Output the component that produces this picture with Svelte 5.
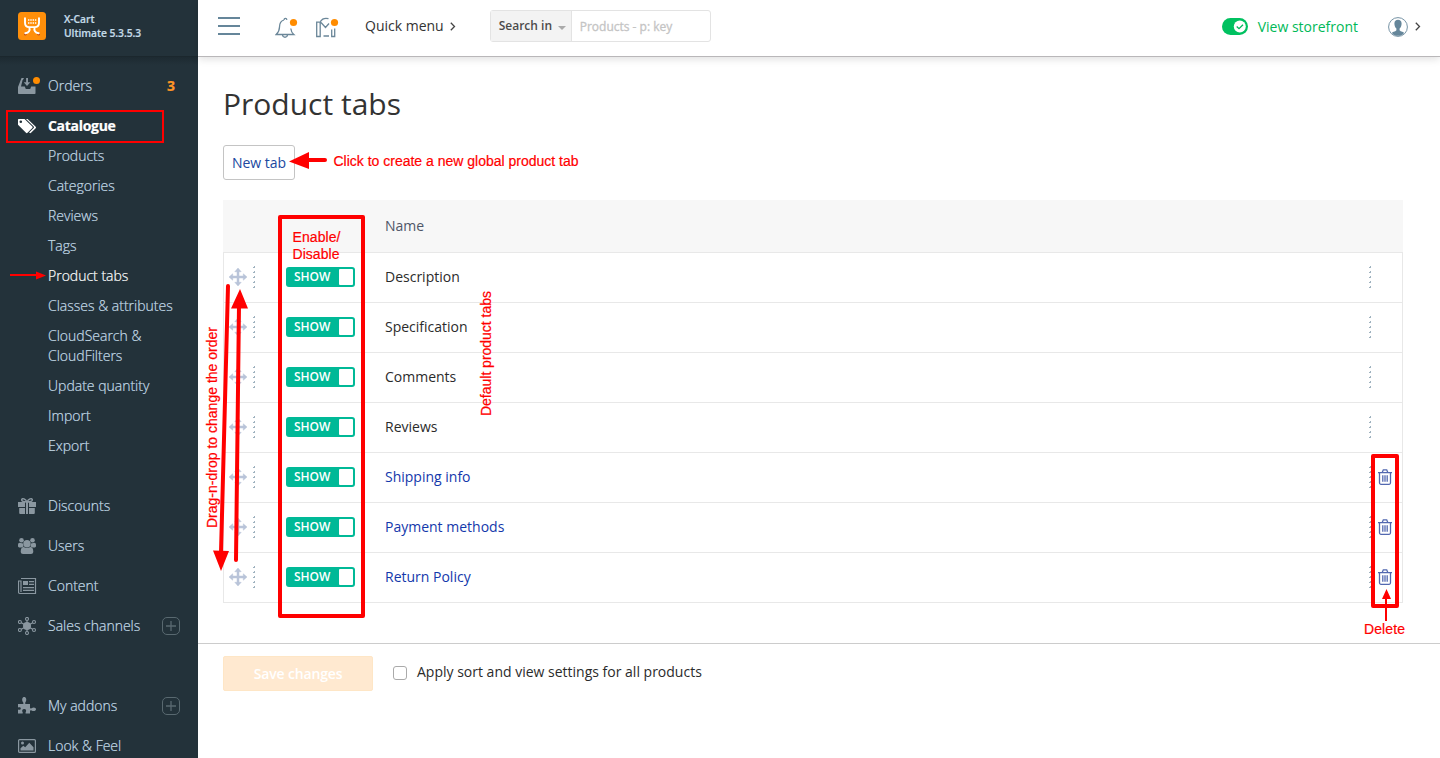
<script>
  const sub = ['Products', 'Categories', 'Reviews', 'Tags', 'Product tabs', 'Classes & attributes', 'CloudSearch & CloudFilters', 'Update quantity', 'Import', 'Export'];
  const rows = [
    { name: 'Description' },
    { name: 'Specification' },
    { name: 'Comments' },
    { name: 'Reviews' },
    { name: 'Shipping info', custom: true },
    { name: 'Payment methods', custom: true },
    { name: 'Return Policy', custom: true }
  ];
  const lower = [
    { name: 'Discounts', icon: 'gift' },
    { name: 'Users', icon: 'users' },
    { name: 'Content', icon: 'news' },
    { name: 'Sales channels', icon: 'hub', add: true },
    { name: 'My addons', icon: 'puzzle', add: true, gap: true },
    { name: 'Look & Feel', icon: 'image' }
  ];
</script>

{#snippet dots()}
  <svg class="dots" width="2" height="22" viewBox="0 0 2 22">
    {#each [0, 5, 10, 15, 20] as y}
      <path d="M1 {y}h1v2h-2v-1h1z" fill="#9fb2bf" />
    {/each}
  </svg>
{/snippet}

{#snippet icon(name)}
  <svg class="icon" width="20" height="18" viewBox="0 0 20 18">
    {#if name === 'orders'}
      <path d="M3.5 1H6L4.9 3H4.6L3 9.5h3.8l1 2.5h4.4l1-2.500H17.5V16.2a.8.8 0 0 1-.8.8H.8a.8.8 0 0 1-.8-.8V10z" />
      <path d="M8.1 1h1.9v4.3h2.3L9 9 5.8 5.3h2.3z" />
    {:else if name === 'tags'}
      <path fill-rule="evenodd" d="M0 2.6V7.8L8 15.7a1 1 0 0 0 1.5 0L14.300 11a1 1 0 0 0 0-1.5L6.500 2H.7a.7.7 0 0 0-.7.6zM2.800 3.500a1.300 1.300 0 1 1 0 2.600a1.300 1.300 0 0 1 0-2.600z" />
      <path d="M8 2h1.600l8.100 7.800a1 1 0 0 1 0 1.400L13 15.800a1 1 0 0 1-1.500 0l-.4-.4 4.600-4.500a1 1 0 0 0 0-1.400z" />
    {:else if name === 'gift'}
      <path d="M0 5h7v5H0zM11 5h7v5h-7zM1.200 11H7v6H2.200a1 1 0 0 1-1-1zM11 11h5.800v5a1 1 0 0 1-1 1H11zM8 5h2v12H8z" />
      <path d="M9 5C7.500 2 4.300.6 3.700 2.500 3.200 4.500 6 4.800 9 5c3 0 5.700-.5 5.300-2.500C13.700.6 10.500 2 9 5z" fill="none" stroke="#8a97a0" stroke-width="1.500" />
    {:else if name === 'users'}
      <circle cx="3.500" cy="3.300" r="2.300" /><circle cx="14.500" cy="3.300" r="2.300" />
      <path d="M0 9.500V8c0-1.500.7-2.300 1.700-2.300L5 6.500 5.500 9.500 3.500 10.500H1zM18 9.500V8c0-1.500-.7-2.300-1.700-2.300L13 6.500l-.5 3 2 1H17z" />
      <circle cx="9" cy="6.700" r="3.700" />
      <path d="M2.700 14.500c0-3.300 1.300-4.600 3-4.600 2 1.500 4.600 1.500 6.600 0 1.700 0 3 1.300 3 4.600 0 1.700-1 2.500-2.300 2.500H5c-1.300 0-2.300-.8-2.300-2.500z" />
    {:else if name === 'news'}
      <path d="M3 1.500h14.500v15H2a1.500 1.500 0 0 1-1.500-1.500V4H3v11" fill="none" stroke="#8a97a0" stroke-width="1.200" />
      <path d="M5 4h5v4H5zM11 4h5v1.200h-5zM11 6.800h5V8h-5zM5 10h11v1.200H5zM5 12.700h11v1.200H5z" />
    {:else if name === 'hub'}
      <path d="M9 1v16M2 5l14 8M16 5L2 13" stroke="#8a97a0" stroke-width="1.200" />
      <circle cx="9" cy="9" r="4" />
      {#each [[9, 1.9], [9, 16], [1.900, 5], [16, 5], [1.900, 13], [16, 13]] as [x, y]}
        <circle cx={x} cy={y} r="1.500" fill="#23323a" stroke="#8a97a0" stroke-width="1.100" />
      {/each}
    {:else if name === 'puzzle'}
      <path d="M0 7h4.300c1.300 0 1.400-.7.900-1.500C3.300 2.500 4.300 0 6.200 0s3 2.500 1.100 5.500C6.800 6.300 7.200 7 8.300 7H12v3.500c0 1 .7 1.300 1.500.8 2-1.500 4.500-.7 4.500 1s-2.500 2.500-4.500 1.100c-.8-.5-1.500-.2-1.500.8V16.500H8.300c-.8 0-1-.6-.6-1.300.9-1.500.4-3.200-1.500-3.200s-2.500 1.700-1.600 3.200c.5.8.2 1.300-.8 1.300H0v-4c1.500.8 2.800.2 2.800-1s-1.300-1.600-2.800-.9z" />
    {:else}
      <rect x=".6" y="2.600" width="16.800" height="12.800" rx="1" fill="none" stroke="#8a97a0" stroke-width="1.200" />
      <circle cx="4.500" cy="6" r="1.500" />
      <path d="M2.500 13.500V11.300L5.300 8.800 7.200 10.300 11.300 5.800 15.500 10.200v3.300z" />
    {/if}
  </svg>
{/snippet}

<div class="app">
  <aside>
    <div class="brand">
      <svg width="28" height="28" viewBox="0 0 28 28">
        <rect width="28" height="28" rx="3.500" fill="#ff8f0a" />
        <g fill="#c94f10"><circle cx="7.300" cy="22.300" r="1.300" /><circle cx="20.700" cy="22.300" r="1.300" /></g>
        <path d="M7 6.300v4.500c0 2.700 1.700 4.300 4.300 4.300h5.400c2.600 0 4.300-1.600 4.300-4.300V6.300M11.300 15.200c1 3-.3 5.600-4 6M16.700 15.200c-1 3 .3 5.600 4 6" fill="none" stroke="#fff" stroke-width="1.900" stroke-linecap="round" />
        <path d="M10 8h1.400M12.300 8h1.400M14.600 8H16M16.900 8h1.400M10 11h1.400M12.300 11h1.400M14.600 11H16M16.900 11h1.400" stroke="#fff" stroke-width="1.500" />
      </svg>
      <div>X-Cart<br />Ultimate 5.3.5.3</div>
    </div>
    <nav>
      <div class="item orders">{@render icon('orders')}<i class="alert"></i><span>Orders</span><b>3</b></div>
      <div class="item current">{@render icon('tags')}<span>Catalogue</span></div>
      <ul>
        {#each sub as s}<li class:on={s === 'Product tabs'}>{s}</li>{/each}
      </ul>
      {#each lower as l}
        <div class="item" class:gap={l.gap}>
          {@render icon(l.icon)}<span>{l.name}</span>
          {#if l.add}
            <svg class="plus" width="18" height="18" viewBox="0 0 18 18"><rect x=".5" y=".5" width="17" height="17" rx="4.500" fill="none" stroke="#596970" /><path d="M4 9h10M9 4v10" stroke="#596970" stroke-width="1.300" /></svg>
          {/if}
        </div>
      {/each}
    </nav>
  </aside>

  <main>
    <header>
      <svg class="burger" width="22" height="20" viewBox="0 0 22 20"><path d="M0 2h22M0 10h22M0 18h22" stroke="#65869a" stroke-width="2" /></svg>
      <svg class="bell" width="24" height="22" viewBox="0 0 24 22">
        <path d="M9 3C5.500 4 4.500 7 4.500 10c0 4-1.200 5.500-3.300 7.500h17.600c-1.500-1.200-2.700-3-3-6M9 3c.2-2 2.600-2 2.900-.2M7.500 18c.5 3 4.500 3 5 0" fill="none" stroke="#6b8799" stroke-width="1.300" />
        <circle cx="18.500" cy="5.500" r="3.600" fill="#ff8c00" />
      </svg>
      <svg class="mkt" width="24" height="22" viewBox="0 0 24 22">
        <path d="M1.700 19.500V5.200h3.500v14.300zM16.700 12.500v7h3v-8M8.500 19h5.500M5 6.500C5.500 2.500 9 .5 13.500 1.700M6 5.500l4.500 5 3.500-4" fill="none" stroke="#6b8799" stroke-width="1.300" />
        <circle cx="19.500" cy="5.500" r="3.600" fill="#ff8c00" />
      </svg>
      <span class="quick">Quick menu</span>
      <svg class="chev" width="6" height="9" viewBox="0 0 6 9"><path d="M.8.7l3.700 3.800-3.700 3.800" fill="none" stroke="#444" stroke-width="1.300" /></svg>
      <div class="search">
        <div class="in">Search in<i></i></div>
        <div class="q">Products - p: key</div>
      </div>
      <svg class="toggle" width="26" height="17" viewBox="0 0 26 17"><rect width="26" height="17" rx="8.500" fill="#00c160" /><circle cx="17.800" cy="8.500" r="6" fill="#fff" /><path d="M14.700 8.500l2.300 2.200 4-4" fill="none" stroke="#00b75a" stroke-width="1.300" /></svg>
      <span class="store">View storefront</span>
      <svg class="user" width="20" height="20" viewBox="0 0 20 20"><circle cx="10" cy="10" r="9.400" fill="#fff" stroke="#65869a" stroke-width=".9" /><path d="M6.400 6.400C6.400 4 7.900 2.700 10 2.700s3.600 1.300 3.600 3.700c0 2.200-.8 4.200-2 5v1.500c0 1.300 3.500 1.700 4.500 2.800-2 4.200-10.200 4.200-12.200 0 1-1.100 4.500-1.500 4.500-2.800v-1.500c-1.200-.8-2-2.800-2-5z" fill="#65869a" /></svg>
      <svg class="chev last" width="6" height="9" viewBox="0 0 6 9"><path d="M.8.7l3.700 3.800-3.700 3.800" fill="none" stroke="#444" stroke-width="1.300" /></svg>
    </header>
    <section>
      <h1>Product tabs</h1>
      <button class="new">New tab</button>
      <div class="table">
        <div class="thead">Name</div>
        {#each rows as r}
          <div class="row">
            <svg class="move" width="18" height="18" viewBox="0 0 18 18"><path d="M9 0l3.200 3.700H10V8h4.300V5.800L18 9l-3.700 3.200V10H10v4.300h2.200L9 18l-3.200-3.700H8V10H3.700v2.200L0 9l3.700-3.200V8H8V3.700H5.800z" fill="#b9c4d9" stroke="#b9c4d9" stroke-width=".5" /></svg>
            {@render dots()}
            <div class="switch"><span>SHOW</span><i></i></div>
            <span class="name" class:link={r.custom}>{r.name}</span>
            {@render dots()}
            <div class="act">
              {#if r.custom}
                <svg width="14" height="16" viewBox="0 0 14 16"><path d="M0 3.700h14M4.200 3.500L5.300.8h3.400l1.100 2.700M1.500 4v9.800a1.500 1.500 0 0 0 1.500 1.500h8a1.500 1.500 0 0 0 1.500-1.500V4M4.800 6.200v6.600M7 6.200v6.600M9.200 6.200v6.600" fill="none" stroke="#5268b0" stroke-width="1.300" /></svg>
              {/if}
            </div>
          </div>
        {/each}
      </div>
    </section>
    <footer>
      <button class="save">Save changes</button>
      <i class="box"></i>
      <span>Apply sort and view settings for all products</span>
    </footer>
  </main>

  <svg class="notes" width="1440" height="758" viewBox="0 0 1440 758">
    <g fill="none" stroke="#f00">
      <rect x="7" y="111" width="156" height="31" stroke-width="2" />
      <rect x="280" y="217" width="83" height="399" stroke-width="4" stroke-linejoin="round" />
      <rect x="1373" y="456" width="24" height="150" stroke-width="4" stroke-linejoin="round" />
      <path d="M10 275h28M1386 621V597" stroke-width="2" />
      <path d="M325 160H305M228 286L221 553M239 305L236 560" stroke-width="4" stroke-linecap="round" />
    </g>
    <path d="M46 275.500l-10-4v8zM289 161.500l20-9.500v17zM221 571l-8-20.500 16 .5zM240 289l-9 19.500h17zM1386.500 589l-4.500 10h9z" fill="#f00" />
    <g fill="#f00" stroke="#f00" stroke-width=".2" font-family="Liberation Sans, Arial, sans-serif" font-size="14">
      <text x="333.500" y="166" textLength="245">Click to create a new global product tab</text>
      <text x="292.500" y="242" textLength="48">Enable/</text>
      <text x="292.500" y="259" textLength="47">Disable</text>
      <text x="1364" y="634" textLength="41">Delete</text>
      <text transform="translate(491 416) rotate(-90)" textLength="125">Default product tabs</text>
      <text transform="translate(217 528) rotate(-90)" textLength="201">Drag-n-drop to change the order</text>
    </g>
  </svg>
</div>

<style>
  :global(body) { margin: 0; background: #fff; overflow: hidden; }
  .app { position: relative; display: flex; height: 758px; overflow: hidden; font: 14px/20px 'Open Sans', sans-serif; color: #2b2b2b; }
  .app svg { flex: none; display: block; }
  aside { width: 198px; flex: none; background: #23323a; color: #c4dbe8; font-weight: 300; -webkit-text-stroke: .2px; }
  .brand { height: 57px; box-sizing: border-box; display: flex; padding: 12px 0 0 18px; gap: 18px; font-size: 10.3px; font-weight: 600; line-height: 14px; border-bottom: 1px solid #1b272d; letter-spacing: -.05px; }
  nav { padding-top: 9px; background: linear-gradient(#1d2a31, #23323a 8px); }
  .item { height: 40px; display: flex; align-items: center; padding-left: 18px; position: relative; }
  .item span { margin-left: 10px; }
  .icon { fill: #8a97a0; }
  .orders b { margin-left: auto; margin-right: 23px; color: #ff9626; font-weight: 700; }
  .alert { position: absolute; left: 33px; top: 11px; width: 7px; height: 7px; border-radius: 50%; background: #ff8c00; }
  .current { color: #fff; font-weight: 700; margin-bottom: -5px; }
  .current span { letter-spacing: -.3px; }
  .current .icon { fill: #fff; }
  ul { list-style: none; margin: 0 0 25px; padding: 0 20px 0 48px; }
  li { padding: 5px 0; }
  li.on { color: #fff; }
  .plus { margin-left: auto; margin-right: 18px; }
  .gap { margin-top: 40px; }
  main { flex: 1; display: flex; flex-direction: column; min-width: 0; }
  header { height: 57px; box-sizing: border-box; flex: none; display: flex; align-items: center; padding: 0 20px 4px; border-bottom: 1px solid #b9b7b9; box-shadow: 0 2px 8px rgba(0,0,0,.13); }
  .bell { margin: 3px 0 0 35px; }
  .mkt { margin: 3px 0 0 16px; }
  .quick { margin: 0 6px 0 26px; color: #333; }
  .search { display: flex; margin-left: 34px; width: 221px; height: 32px; box-sizing: border-box; border: 1px solid #e3e3e3; border-radius: 3px; font-size: 12px; line-height: 32px; }
  .in { width: 81px; box-sizing: border-box; padding-left: 8px; background: #f3f3f3; border-right: 1px solid #e3e3e3; font-weight: 600; color: #4b4b4b; display: flex; align-items: center; gap: 6px; }
  .in i { border: 4px solid transparent; border-top-color: #aaa; border-bottom: 0; margin-top: 3px; }
  .q { padding-left: 8px; color: #c4c4c4; -webkit-text-stroke: .3px; }
  .toggle { margin: 1px 0 0 auto; }
  .store { margin: 2px 30px 0 10px; color: #00b958; }
  .user { margin-top: 1px; }
  .last { margin: 1px -1px 0 7px; }
  section { padding: 27px 37px 0 25px; height: 559px; }
  h1 { margin: 0; font-size: 30px; line-height: 40px; font-weight: 400; color: #333; }
  .new { display: block; margin: 21px 0 20px; width: 72px; height: 35px; padding: 0; background: #fff; border: 1px solid #c4c4c4; border-radius: 3px; font: inherit; color: #2048a0; }
  .table { border: 1px solid #e8e8e8; border-top: 0; }
  .thead { height: 52px; line-height: 52px; margin: 0 -1px; padding-left: 162px; background: #f7f7f7; color: #4f5668; }
  .row { height: 49px; box-sizing: content-box; border-top: 1px solid #e8e8e8; display: flex; align-items: center; padding-left: 5px; }
  .row > * { position: relative; top: -1px; }
  .row .dots { margin-left: 6px; }
  .switch { width: 69px; height: 20px; margin: 0 30px 0 31px; border-radius: 3px; background: #00b997; color: #fff; font-size: 12px; line-height: 20px; font-weight: 600; display: flex; align-items: center; justify-content: space-between; padding: 0 2px 0 8px; box-sizing: border-box; }
  .switch i { width: 14px; height: 16px; background: #fff; border-radius: 1px; }
  .name { flex: 1; }
  .link { color: #1338ab; }
  .act { width: 24px; margin-left: 7px; }
  footer { border-top: 1px solid #ccc; flex: 1; display: flex; align-items: flex-start; padding: 12px 25px; }
  .save { width: 150px; height: 35px; border: 1px solid #fee6c6; background: #ffe9d0; border-radius: 2px; color: #fff; font: 600 14px 'Open Sans', sans-serif; letter-spacing: -.15px; }
  .box { width: 12px; height: 12px; border: 1px solid #aaa; border-radius: 3px; margin: 10px 10px 0 20px; }
  footer span { margin-top: 6px; }
  .notes { position: absolute; inset: 0; pointer-events: none; }
</style>
